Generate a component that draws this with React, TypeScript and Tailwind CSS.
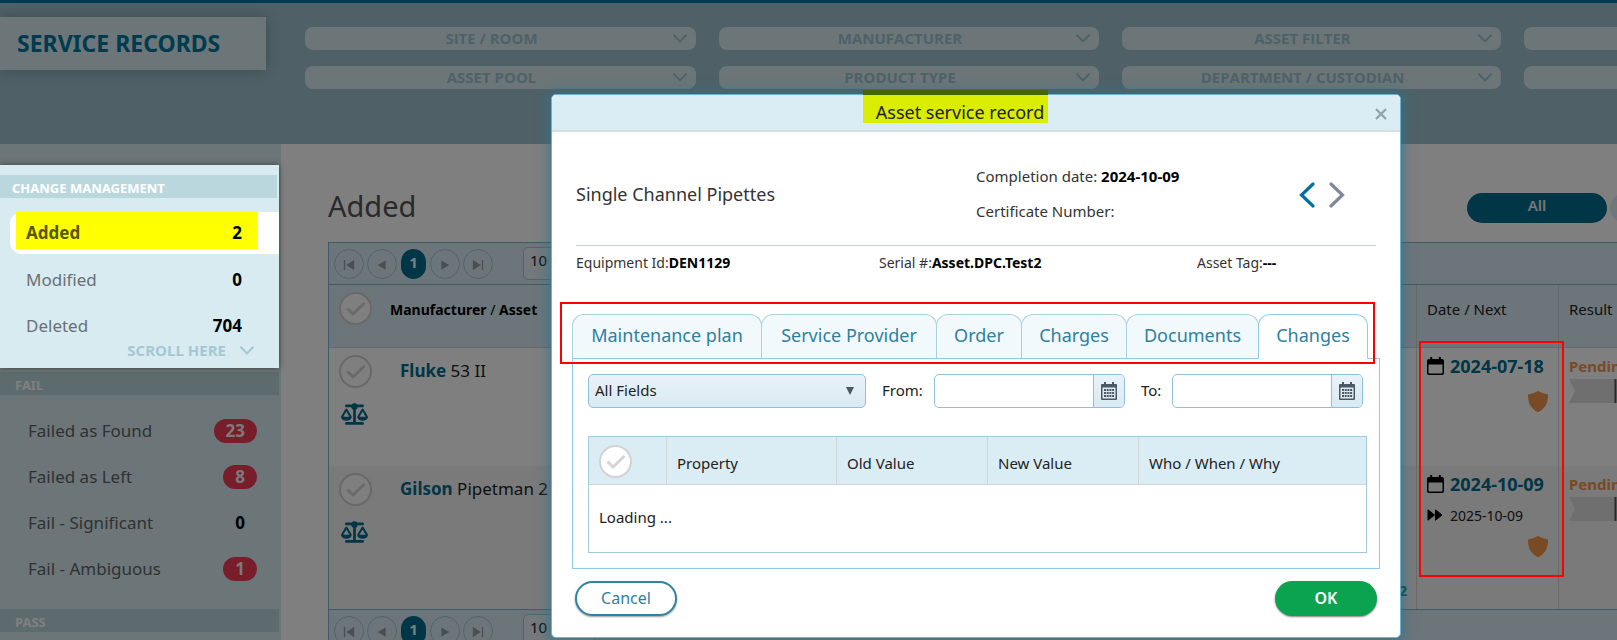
import { useState } from 'react';
import { FaScaleBalanced } from 'react-icons/fa6';

const filters = [
  'SITE / ROOM',
  'MANUFACTURER',
  'ASSET FILTER',
  '',
  'ASSET POOL',
  'PRODUCT TYPE',
  'DEPARTMENT / CUSTODIAN',
  '',
];

const failItems = [
  { label: 'Failed as Found', count: 23 },
  { label: 'Failed as Left', count: 8 },
  { label: 'Fail - Significant', count: 0 },
  { label: 'Fail - Ambiguous', count: 1 },
];

const tabs = [
  { label: 'Maintenance plan', width: 'w-[190px]' },
  { label: 'Service Provider', width: 'w-[176px]' },
  { label: 'Order', width: 'w-[86px]' },
  { label: 'Charges', width: 'w-[106px]' },
  { label: 'Documents', width: 'w-[133px]' },
  { label: 'Changes', width: 'w-[110px]' },
];

const records = [
  { brand: 'Fluke', model: '53 II', date: '2024-07-18', next: '', height: 'h-[118px]', bg: 'bg-white', extra: '' },
  { brand: 'Gilson', model: 'Pipetman 2', date: '2024-10-09', next: '2025-10-09', height: 'h-[143px]', bg: 'bg-[#f4f4f4]', extra: '2' },
];

function ChevronDown({ className }: { className: string }) {
  return (
    <svg viewBox="0 0 14 9" className={className} fill="none" stroke="currentColor" strokeWidth="2" strokeLinecap="round">
      <path d="M1 1.2 7 7.4 13 1.2" />
    </svg>
  );
}

function CheckCircle() {
  return (
    <button
      type="button"
      aria-label="Select"
      className="flex size-[33px] items-center justify-center rounded-full border-2 border-[#d2d2d2] bg-white text-[#d4d4d4]"
    >
      <svg viewBox="0 0 20 16" className="h-4 w-5" fill="none" stroke="currentColor" strokeWidth="3">
        <path d="M1.5 7.5 7 13 18.5 2" />
      </svg>
    </button>
  );
}

function GridCalendarIcon() {
  return (
    <svg viewBox="0 0 16 18" className="h-[18px] w-4">
      <path fill="#4a5966" d="M1 2h2V0h2v2h6V0h2v2h2a1 1 0 0 1 1 1v14a1 1 0 0 1-1 1H1a1 1 0 0 1-1-1V3a1 1 0 0 1 1-1Z" />
      <path fill="#dfeaf1" d="M1.500 5.500h13v11h-13z" />
      <g fill="#4a5966">
        <path d="M3 7h2v2H3zM5.700 7h2v2h-2zM8.400 7h2v2h-2zM11.100 7h2v2h-2z" />
        <path d="M3 10h2v2H3zM5.700 10h2v2h-2zM8.400 10h2v2h-2zM11.100 10h2v2h-2z" />
        <path d="M3 13h2v2H3zM5.700 13h2v2h-2zM8.400 13h2v2h-2zM11.100 13h2v2h-2z" />
      </g>
    </svg>
  );
}

function CalendarIcon() {
  return (
    <svg viewBox="0 0 17 18" className="h-[18px] w-[17px]">
      <path d="M3.2 0h2v2h6.6V0h2v2H15a2 2 0 0 1 2 2v12a2 2 0 0 1-2 2H2a2 2 0 0 1-2-2V4a2 2 0 0 1 2-2h1.2V0ZM1.500 7.500v8.100c0 .5.4.9.9.9h12.200c.5 0 .9-.4.9-.9V7.500H1.500Z" />
    </svg>
  );
}

function ShieldIcon() {
  return (
    <svg viewBox="0 0 20 21" className="h-[21px] w-5">
      <path fill="#f0954d" d="M10 0c2.400 1.500 6.500 2.800 9.300 3.300.4.100.7.400.7.900 0 8-3 13.500-9.400 16.700a1.300 1.300 0 0 1-1.200 0C3 17.700 0 12.200 0 4.200c0-.5.300-.800.700-.900C3.500 2.800 7.600 1.500 10 0Z" />
    </svg>
  );
}

const pagerPaths = ['M1.500 0v10M10.500 1 4.500 5l6 4z', 'M9 1.500 3 5l6 3.500z', '', 'M3 1.500 9 5l-6 3.500z', 'M10.500 0v10M1.500 1l6 4-6 4z'];
const pagerLabels = ['First page', 'Previous page', 'Page 1', 'Next page', 'Last page'];

function Pager() {
  return (
    <div className="flex h-[41px] items-center bg-[#d9ebf5] pl-[5px]">
      <div className="flex items-center gap-[3px]">
        {pagerPaths.map((path, i) =>
          path ? (
            <button
              key={i}
              type="button"
              aria-label={pagerLabels[i]}
              className="flex size-[30px] items-center justify-center rounded-full border border-[#9fc8d6] pt-0.5"
            >
              <svg viewBox="0 0 12 10" className="h-2.5 w-3" fill="#929fa7" stroke="#929fa7" strokeWidth="1.3">
                <path d={path} />
              </svg>
            </button>
          ) : (
            <button
              key={i}
              type="button"
              className="mx-px h-[30px] w-[25px] rounded-full bg-[#006c8c] pb-1 text-[15px] leading-5 font-bold text-white"
            >
              1
            </button>
          )
        )}
      </div>
      <select
        aria-label="Page size"
        className="ml-[30px] h-[33px] w-[72px] appearance-none rounded-[5px] border border-[#9fc8d6] bg-[#e6f2f8] px-1.5 pb-1.5 text-[15px] text-[#222]"
      >
        <option>10</option>
      </select>
    </div>
  );
}

function DateField({ id, label, labelClass }: { id: string; label: string; labelClass: string }) {
  return (
    <>
      <label htmlFor={id} className={labelClass}>
        {label}
      </label>
      <div className="flex h-[34px] w-[191px] overflow-hidden rounded-[5px] border border-[#8fc0d8]">
        <input id={id} type="text" className="min-w-0 flex-1 px-2 outline-none" />
        <button
          type="button"
          aria-label={`${label} calendar`}
          className="flex w-[31px] items-center justify-center border-l border-[#8fc0d8] bg-linear-to-b from-[#e9f2f8] to-[#d9eaf2]"
        >
          <GridCalendarIcon />
        </button>
      </div>
    </>
  );
}

function Sidebar() {
  return (
    <aside className="w-[281px] shrink-0 bg-[#d8ecf1] pt-[21px]">
      {/* Highlighted group, stays above the dimmed page */}
      <section className="relative z-20 mr-0.5 bg-[#d7ebf1] pt-2.5 pb-2 shadow-[0_0_6px_rgba(0,0,0,0.45)]">
        <h2 className="mr-0.5 h-[23px] bg-[#bad7dd] px-3 text-[13px] leading-[26px] font-bold text-white">CHANGE MANAGEMENT</h2>
        <ul className="mt-3.5 text-[17px] leading-6 text-[#6b6f73]">
          <li className="ml-2.5 h-[42px] rounded-l-[12px] bg-white pl-1.5">
            <a href="#added" className="mr-[21px] flex h-[37px] items-center justify-between bg-[#ffff00] pt-1 pr-4 pl-2.5 font-bold text-[#55560c]">
              Added <span className="text-black">2</span>
            </a>
          </li>
          <li className="mt-3.5">
            <a href="#modified" className="mr-[21px] flex justify-between pr-4 pl-[26px]">
              Modified <span className="font-bold text-black">0</span>
            </a>
          </li>
          <li className="mt-[22px]">
            <a href="#deleted" className="mr-[21px] flex justify-between pr-4 pl-[26px]">
              Deleted <span className="font-bold text-black">704</span>
            </a>
          </li>
        </ul>
        <button type="button" className="mt-0.5 mr-[25px] ml-auto flex h-5 items-center gap-[14px] font-['Open_Sans',sans-serif] text-[15px] font-bold text-[#a3c8d3]">
          SCROLL HERE
          <ChevronDown className="h-[9px] w-3.5" />
        </button>
      </section>

      <h2 className="mt-1 mr-0.5 h-[23px] bg-[#bad7dd] px-[15px] text-[13px] leading-[26px] font-bold text-white">FAIL</h2>
      <ul className="mt-[13px] text-[17px] text-[#5e6468]">
        {failItems.map((item) => (
          <li key={item.label} className="flex h-[46px] items-center justify-between pr-6 pl-7">
            {item.label}
            <span
              className={`h-6 rounded-full px-3 leading-6 font-bold ${
                item.count > 0 ? 'bg-[#f03a55] text-[#f4f4f4]' : 'text-black'
              }`}
            >
              {item.count}
            </span>
          </li>
        ))}
      </ul>
      <h2 className="mt-[17px] mr-0.5 h-[23px] bg-[#bad7dd] px-[15px] text-[13px] leading-[26px] font-bold text-white">PASS</h2>
    </aside>
  );
}

function Records() {
  return (
    <main className="min-w-0 flex-1 bg-white pl-[47px]">
      <div className="-mr-[62px]">
        <div className="flex h-[98px] items-start pt-[49px]">
          <h1 className="flex-1 text-[29px] leading-[26px] text-[#555]">Added</h1>
          <div className="flex gap-[3px]">
            <button type="button" className="h-[30px] w-[140px] rounded-full bg-[#006c8c] pb-1.5 text-[15px] font-semibold text-[#eee]">
              All
            </button>
            <button type="button" aria-label="More" className="h-[30px] w-[69px] rounded-full bg-[#dcecf0]" />
          </div>
        </div>

        <div className="relative border border-[#7fb6cb]">
          <Pager />
          <table className="w-full table-fixed border-separate border-spacing-0 border-y border-[#7fb6cb] text-left">
            <thead className="bg-[#d9ebf5] text-[15px] text-[#222]">
              <tr className="h-[63px]">
                <th className="w-[61px] border-b border-[#c6d3da] pt-[7px] pl-2.5 align-top">
                  <CheckCircle />
                </th>
                <th className="w-[400px] border-b border-[#c6d3da] pb-3.5 text-[14px] font-bold text-black">
                  Manufacturer <span className="font-normal">/</span> Asset
                </th>
                <th className="border-b border-[#c6d3da]" />
                <th className="w-[142px] border-b border-l border-[#c6d3da] pb-3.5 pl-2.5 font-normal">Date / Next</th>
                <th className="w-[120px] border-b border-l border-[#c6d3da] pb-3.5 pl-2.5 font-normal">Result</th>
              </tr>
            </thead>
            <tbody>
              {records.map((record) => (
                <tr key={record.date} className={`align-top ${record.height} ${record.bg}`}>
                  <td className="pt-[7px] pl-2.5">
                    <CheckCircle />
                    <FaScaleBalanced className="mt-[13px] ml-0.5 h-[26px] w-[27px] text-[#006c8c]" />
                  </td>
                  <td className="pt-[11px] pl-2.5 text-[17px] leading-6 text-[#222]">
                    <a href="#asset" className="font-bold text-[#006c8c]">
                      {record.brand}
                    </a>{' '}
                    {record.model}
                  </td>
                  <td className="pr-[9px] pb-2 text-right align-bottom text-[14px] font-bold text-[#009070]">{record.extra}</td>
                  <td className="border-l border-[#d6d6d6] pt-[5px] pr-2.5 pl-2.5">
                    <div className="flex h-[26px] items-center gap-[6px]">
                      <CalendarIcon />
                      <a href="#date" className="text-[18px] font-bold text-[#006c8c]">
                        {record.date}
                      </a>
                    </div>
                    {record.next && (
                      <div className="mt-[9px] flex h-[18px] items-center gap-[7px] text-[14px] text-[#222]">
                        <svg viewBox="0 0 16 12" className="h-3 w-4" stroke="#000" strokeLinejoin="round">
                          <path d="M1 .800 7.500 6 1 11.200zM8.500 .800 15 6l-6.500 5.200z" />
                        </svg>
                        {record.next}
                      </div>
                    )}
                    <div className="mt-3 flex justify-end">
                      <ShieldIcon />
                    </div>
                  </td>
                  <td className="border-l border-[#d6d6d6] pt-[5px] pl-2.5">
                    <div className="h-[26px] text-[15px] leading-[26px] font-bold text-[#f0954d]">Pending</div>
                    <svg viewBox="0 0 60 24" className="h-6 w-[60px]">
                      <path fill="#dedede" d="M0 0h46v24H0l6-12z" />
                      <path fill="#555" d="M45.500 0h2v24h-2z" />
                      <path fill="#dedede" d="M48 0h12v24H48z" />
                    </svg>
                  </td>
                </tr>
              ))}
            </tbody>
          </table>
          <Pager />
          {/* Outline around the date column */}
          <div className="pointer-events-none absolute top-[98px] right-[114px] z-20 h-[236px] w-[145px] border-2 border-[#ff0000]" />
        </div>
      </div>
    </main>
  );
}

function ServiceRecordDialog() {
  const [activeTab, setActiveTab] = useState('Changes');

  return (
    <div
      role="dialog"
      aria-label="Asset service record"
      className="absolute top-[94px] left-[551px] z-30 w-[850px] rounded-[5px] border border-[#6fb1cf] bg-white pb-[21px] text-[15px] text-[#333] shadow-[0_0_12px_3px_rgba(40,115,145,0.65)]"
    >
      <header className="relative flex h-[37px] justify-center rounded-t-[4px] border-b-2 border-[#d9dde0] bg-[#daecf4]">
        <h2 className="relative -ml-[42px] h-7 w-[185px] bg-[#daec00] pl-2.5 text-center text-[18px] leading-[34px] text-[#222] before:absolute before:-top-[5px] before:left-0 before:h-[5px] before:w-full before:bg-[#456300]">
          Asset service record
        </h2>
        <button type="button" aria-label="Close" className="absolute top-[13px] right-[13px] text-[#94a3ab]">
          <svg viewBox="0 0 12 12" className="size-3" fill="none" stroke="currentColor" strokeWidth="2.4">
            <path d="m1 1 10 10M11 1 1 11" />
          </svg>
        </button>
      </header>

      <div className="px-5">
        <section className="mx-1 flex h-[114px] items-center border-b border-[#c8cdcf] pt-3">
          <h3 className="w-[400px] text-[18px]">Single Channel Pipettes</h3>
          <div className="flex-1 pb-0.5 leading-[35px]">
            <p>
              Completion date: <b className="text-black">2024-10-09</b>
            </p>
            <p>Certificate Number:</p>
          </div>
          <div className="mr-[31px] flex gap-3.5">
            <button type="button" aria-label="Previous record" className="text-[#00739a]">
              <svg viewBox="0 0 16 26" className="h-[26px] w-4" fill="none" stroke="currentColor" strokeWidth="3.2" strokeLinecap="round">
                <path d="M14 2 2.500 13 14 24" />
              </svg>
            </button>
            <button type="button" aria-label="Next record" className="text-[#7f889b]">
              <svg viewBox="0 0 16 26" className="h-[26px] w-4" fill="none" stroke="currentColor" strokeWidth="3.2" strokeLinecap="round">
                <path d="M2 2 13.500 13 2 24" />
              </svg>
            </button>
          </div>
        </section>

        <section className="mx-1 grid h-[34px] grid-cols-[303px_318px_1fr] items-center pb-0.5 text-[14px]">
          <p>
            Equipment Id:<b className="text-black">DEN1129</b>
          </p>
          <p>
            Serial #:<b className="text-black">Asset.DPC.Test2</b>
          </p>
          <p>
            Asset Tag:<b className="text-black">---</b>
          </p>
        </section>

        <div className="relative mt-[34px]">
          <div role="tablist" className="flex">
            {tabs.map((tab) => (
              <button
                key={tab.label}
                type="button"
                role="tab"
                aria-selected={tab.label === activeTab}
                onClick={() => setActiveTab(tab.label)}
                className={`relative -mr-px -mb-px h-[45px] rounded-t-[12px] border pb-0.5 text-[18px] text-[#2f7f9f] ${tab.width} ${
                  tab.label === activeTab
                    ? 'border-[#8dcbe6] border-b-white bg-white'
                    : 'border-[#abd0dc] border-b-[#8dcbe6] bg-[#f1f9fc]'
                }`}
              >
                {tab.label}
              </button>
            ))}
          </div>
          {/* Outline around the tab strip */}
          <div className="pointer-events-none absolute -top-3 right-[5px] -bottom-1.5 -left-3 z-10 border-2 border-[#ff0000]" />
        </div>

        <div className="border border-[#8dcbe6] pt-[15px] pr-3 pb-[15px] pl-[15px]">
          <div className="flex items-center text-[#222]">
            <div className="relative">
              <select
                aria-label="Field"
                className="h-[34px] w-[278px] appearance-none rounded-[5px] border border-[#8fc0d8] bg-linear-to-b from-[#e9f2f8] to-[#d9eaf2] px-1.5 pb-0.5"
              >
                <option>All Fields</option>
              </select>
              <svg viewBox="0 0 8 8" className="pointer-events-none absolute top-[13px] right-3 size-2">
                <path fill="#4a5966" d="M0 0h8L4 8z" />
              </svg>
            </div>
            <DateField id="from" label="From:" labelClass="ml-4 w-[52px] pb-0.5" />
            <DateField id="to" label="To:" labelClass="ml-4 w-[31px] pb-0.5" />
          </div>

          <table className="mt-7 w-full table-fixed border-separate border-spacing-0 border border-[#a5cbdb] text-left text-[#222]">
            <thead className="bg-[#daecf4]">
              <tr className="h-12">
                <th className="w-[77px] border-b border-[#d2d6d9] pt-0.5 pl-2.5">
                  <CheckCircle />
                </th>
                <th className="w-[170px] border-b border-l border-[#d2d6d9] pt-1.5 pl-2.5 font-normal">Property</th>
                <th className="w-[151px] border-b border-l border-[#d2d6d9] pt-1.5 pl-2.5 font-normal">Old Value</th>
                <th className="w-[151px] border-b border-l border-[#d2d6d9] pt-1.5 pl-2.5 font-normal">New Value</th>
                <th className="border-b border-l border-[#d2d6d9] pt-1.5 pl-2.5 font-normal">Who / When / Why</th>
              </tr>
            </thead>
            <tbody>
              <tr className="h-[67px]">
                <td colSpan={5} className="pb-0.5 pl-2.5">
                  Loading ...
                </td>
              </tr>
            </tbody>
          </table>
        </div>

        <footer className="mx-[3px] mt-3 flex justify-between text-[16px]">
          <button
            type="button"
            className="h-[35px] w-[102px] rounded-full border-2 border-[#2f84a3] bg-white pb-0.5 text-[#2f7f9f] shadow-[0_1px_2px_rgba(0,0,0,0.4)]"
          >
            Cancel
          </button>
          <button type="button" className="h-[35px] w-[102px] rounded-full bg-[#0ba250] pb-0.5 font-semibold text-white shadow-[0_1px_2px_rgba(0,0,0,0.5)]">
            OK
          </button>
        </footer>
      </div>
    </div>
  );
}

export default function App() {
  return (
    <div className="relative flex h-screen flex-col overflow-hidden bg-white font-['Noto_Sans',sans-serif]">
      <header className="flex h-36 shrink-0 items-start border-t-[3px] border-[#00769e] bg-[#9ec3cf]">
        <div className="mt-3.5 h-[53px] w-[266px] shrink-0 bg-[#d8ecf1] pl-[17px] text-[23px] leading-[53px] font-bold text-[#00769e] shadow-[0_0_14px_rgba(0,0,0,0.25)]">
          SERVICE RECORDS
        </div>
        <div className="mt-6 ml-[39px] grid grid-cols-[391px_380px_379px_380px] gap-x-[23px] gap-y-4">
          {filters.map((filter, i) => (
            <button
              key={i}
              type="button"
              aria-label={filter || 'More filters'}
              className="relative h-[23px] rounded-[8px] bg-[#d8ecf1] pr-[18px] font-['Open_Sans',sans-serif] text-[15px] leading-[23px] font-bold text-[#9ec3cf]"
            >
              {filter}
              <ChevronDown className="absolute top-[7px] right-[9px] h-[9px] w-3.5" />
            </button>
          ))}
        </div>
      </header>

      <div className="flex min-h-0 flex-1">
        <Sidebar />
        <Records />
      </div>

      <div className="absolute inset-0 z-10 bg-black/50" />
      <ServiceRecordDialog />
    </div>
  );
}
